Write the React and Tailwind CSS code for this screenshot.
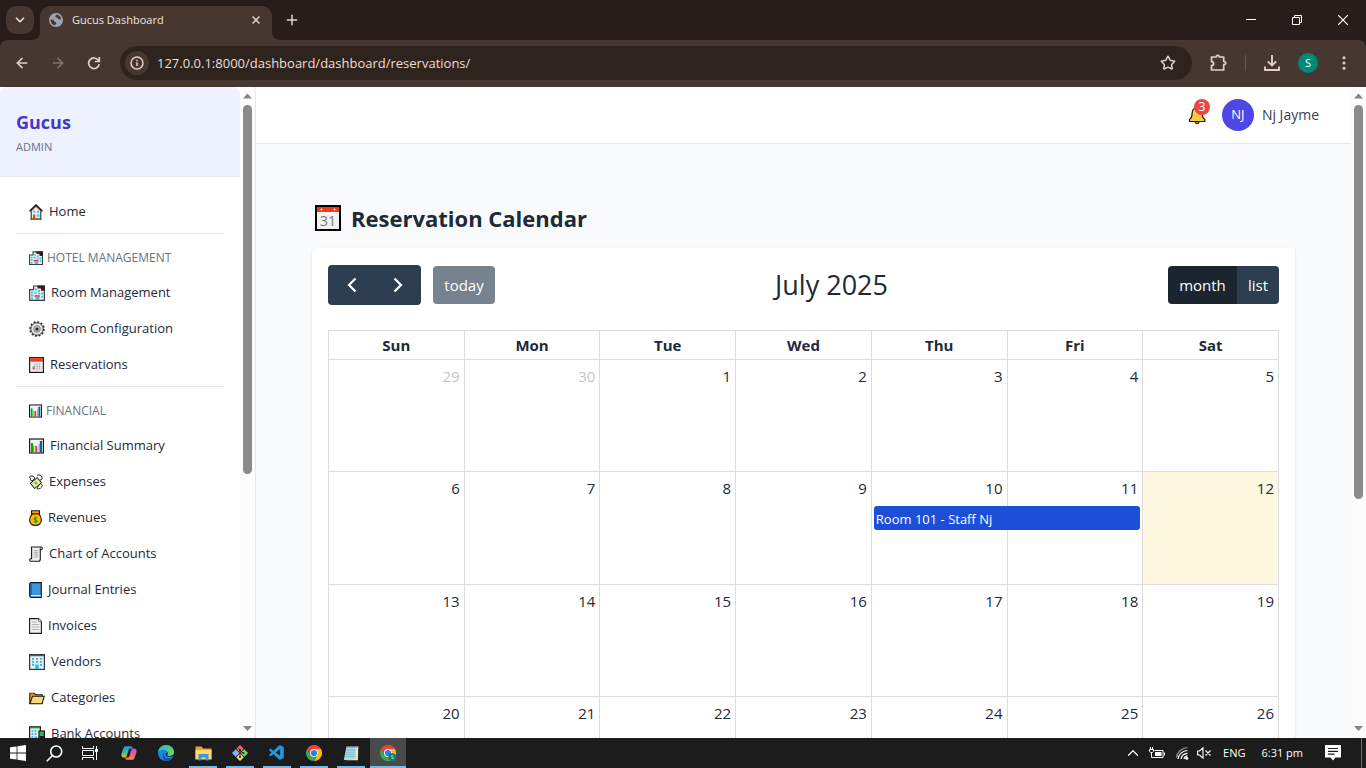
import React from "react";
import { ArrowLeft, ArrowRight, ChevronDown, ChevronUp, Plus, X, Star } from "lucide-react";
import { VscVscode } from "react-icons/vsc";

const K = "#1b1b1b";

/* ---------- small colour drawings used as menu icons ---------- */

function House({ className }) {
  return (
    <svg className={className} viewBox="0 0 14 16" aria-hidden="true">
      <path d="M2.2 6.5V15h9.6V6.5L7 1.8z" fill="#ededed" stroke={K} />
      <path d="M.5 7.3 7 1l6.5 6.3" fill="none" stroke={K} strokeWidth="1.5" />
      <path d="M2.5 6.8 7 2.5l4.5 4.3" fill="none" stroke="#d13438" strokeWidth=".8" />
      <rect x="4" y="10.500" width="2.200" height="4.500" fill="#f03a17" />
      <rect x="8" y="10.500" width="2.500" height="2.300" fill="#3bc9ee" />
      <rect x="4.300" y="6.700" width="2" height="2" fill="#3bc9ee" />
      <rect x="8" y="6.700" width="2" height="2" fill="#3bc9ee" />
      <path d="M1 15.300h12" stroke="#16a010" strokeWidth="1" />
    </svg>
  );
}

function Hotel({ className }) {
  return (
    <svg className={className} viewBox="0 0 16 16" aria-hidden="true">
      <path d="M.6 15.400V4.600h4V1h10.800v14.400z" fill="#e9eef0" stroke="#3a3f42" strokeWidth="1.200" />
      <path d="M8.500.800h7v5h-3.500V3.500H8.500z" fill="#7a0f1c" />
      <path d="M13 1v4.500M15 1v4.500M13 3.300h2M8.500 1.200h7" stroke={K} strokeWidth="1" />
      <g fill="#35c3ea">
        <path d="M2 6.500h2v2H2zM2 9.500h2v2H2zM2 12.500h2v2H2zM6 3.500h1.800v2H6zM5.500 6.700h2v2h-2zM9 5h2v1.800H9zM12 7.500h2v2h-2zM9 7.800h2v1.500H9zM12.300 10.700h1.700v2h-1.700z" />
        <rect x="6.500" y="12" width="4" height="3" />
      </g>
      <path d="M5.300 11h5.600" stroke="#e81224" strokeWidth="1.300" />
    </svg>
  );
}

function Gear({ className }) {
  return (
    <svg className={className} viewBox="0 0 16 16" aria-hidden="true">
      <circle cx="8" cy="8" r="6.900" fill="none" stroke="#2b2b2b" strokeWidth="1.800" strokeDasharray="2 1.610" />
      <circle cx="8" cy="8" r="6.200" fill="#e2e2e2" stroke="#3a3a3a" strokeWidth=".9" />
      <circle cx="8" cy="8" r="3.300" fill="#bdbdbd" stroke="#777" strokeWidth=".8" />
      <circle cx="8" cy="8" r="1.500" fill={K} />
    </svg>
  );
}

function CalendarGrid({ className }) {
  return (
    <svg className={className} viewBox="0 0 15 16" aria-hidden="true">
      <rect x=".6" y=".6" width="13.800" height="14.800" fill="#f0f0f0" stroke={K} strokeWidth="1.200" />
      <rect x="1.200" y="1.200" width="12.600" height="3.500" fill="#f03a17" />
      <path d="M5.500 7H12M3 9.500h9.500M3 12h9M5.500 6.500V13M8 6.500V13M10.500 6.500V12" stroke="#b0b0b0" strokeWidth=".7" />
      <rect x="3.600" y="10" width="2.200" height="2.200" fill="#e8634f" />
    </svg>
  );
}

function CalendarDate({ className }) {
  return (
    <svg className={className} viewBox="0 0 26 26" aria-hidden="true">
      <rect x="1" y="1" width="24" height="24" fill="#f2f2f2" stroke="#000" strokeWidth="2" />
      <rect x="2" y="2" width="22" height="5" fill="#f03a17" />
      <circle cx="6.500" cy="4.500" r=".9" fill="#fff" />
      <circle cx="19.500" cy="4.500" r=".9" fill="#fff" />
      <text x="13" y="21" textAnchor="middle" fontFamily="Open Sans, sans-serif" fontSize="14" fontWeight="400" fill="#767676">31</text>
    </svg>
  );
}

function Bars({ className }) {
  return (
    <svg className={className} viewBox="0 0 15 16" aria-hidden="true">
      <rect x=".6" y="1" width="13.800" height="14" fill="#f2f2f2" stroke={K} strokeWidth="1.200" />
      <rect x="2" y="5" width="2" height="9.400" fill="#16a010" />
      <rect x="4" y="7.500" width="1.300" height="6.900" fill="#35d52b" />
      <rect x="6.300" y="8" width="2" height="6.400" fill="#f03a17" />
      <rect x="10.800" y="3" width="2.200" height="11.400" fill="#0063b1" />
      <rect x="9.600" y="6" width="1.200" height="8.400" fill="#5aa9e6" />
    </svg>
  );
}

function WingedMoney({ className }) {
  return (
    <svg className={className} viewBox="0 0 14 16" aria-hidden="true">
      <path d="M1 2.200 4 2l2 2-3 3-2-1.500.8-.8L.7 4z" fill="#fff" stroke={K} strokeWidth=".9" />
      <path d="M8 1.200c2-.7 4.500-.2 5 1.800.5 1.800-.5 2.800-2 3.200" fill="#fff" stroke={K} strokeWidth="1" />
      <path d="M8 14.800c2.500.5 5-.8 5.300-3.300L11 9z" fill="#fff" stroke={K} strokeWidth=".9" />
      <path d="m1.300 9.300 7-5.800 4.300 5.300-7 5.800z" fill="#b5d56a" stroke={K} strokeWidth="1" />
      <path d="m3 9.500 5-4.300 3 3.700-5 4.200z" fill="#e8f2c4" />
      <circle cx="7" cy="9" r="1.600" fill="#8db33a" />
    </svg>
  );
}

function MoneyBag({ className }) {
  return (
    <svg className={className} viewBox="0 0 13 16" aria-hidden="true">
      <path d="M2.500.8h8v2.800h-8z" fill="#f5a300" stroke={K} strokeWidth="1.100" />
      <path d="M3.300 4h6.400c1.800 1.500 2.700 3.500 2.700 6 0 3.400-2.400 5.400-5.900 5.400S.6 13.400.6 10c0-2.500.9-4.500 2.700-6z" fill="#ffb900" stroke={K} strokeWidth="1.100" />
      <path d="M3.300 4.200h6.400" stroke="#b35a00" strokeWidth="1.300" />
      <path d="M8.300 8.200c-.6-.6-3.300-.9-3.300.7 0 1.500 3.300.7 3.300 2.300 0 1.500-2.800 1.300-3.600.5M6.600 6.800v6.200" fill="none" stroke="#16a010" strokeWidth="1.100" />
    </svg>
  );
}

function Scroll({ className }) {
  return (
    <svg className={className} viewBox="0 0 14 16" aria-hidden="true">
      <path d="M2.500 1h9.800c1.300 0 1.300 2.700 0 2.700h-1V13c0 1.500-.6 2.300-1.800 2.300H1.600c-1.300 0-1.300-2.500 0-2.500h1V3C2.500 2 2 1.500 2.500 1z" fill="#f0f0f0" stroke={K} strokeWidth="1.100" />
      <path d="M4.500 4.500h5M4.500 6.700h5M4.500 8.900h5M4.500 11.100h5M7 4.500v7" stroke="#a8a8a8" strokeWidth=".8" />
      <path d="M11.300 3.700V1.500" stroke={K} strokeWidth=".8" />
    </svg>
  );
}

function BlueBook({ className }) {
  return (
    <svg className={className} viewBox="0 0 13 16" aria-hidden="true">
      <path d="M.7 2.200C.7 1 1.300.7 2.200.7h10.100v14.600H2c-.8 0-1.300-.5-1.300-1.500z" fill="#3a96dd" stroke={K} strokeWidth="1.200" />
      <path d="M2 1.300v11.500" stroke="#0063b1" strokeWidth="1.400" />
      <path d="M2 13.700h9.800" stroke="#e6f1fa" strokeWidth="1.200" />
    </svg>
  );
}

function Page({ className }) {
  return (
    <svg className={className} viewBox="0 0 13 16" aria-hidden="true">
      <path d="M.6.600h9L12.400 3.500v11.900H.6z" fill="#f2f2f2" stroke={K} strokeWidth="1.100" />
      <path d="M9.500.600v3h3" fill="#cfcfcf" stroke="#666" strokeWidth=".7" />
      <path d="M2.700 4h5M2.700 6.500h7.600M2.700 9h7.600M2.700 11.500h7.600" stroke="#b3b3b3" strokeWidth="1" />
    </svg>
  );
}

function Office({ className }) {
  return (
    <svg className={className} viewBox="0 0 16 16" aria-hidden="true">
      <rect x=".6" y=".6" width="14.800" height="14.800" fill="#e9eef0" stroke="#2f3a40" strokeWidth="1.200" />
      <path d="M1 1.500h14" stroke="#4f5b61" strokeWidth="1.400" />
      <path d="M3 4h2v1.700H3zM7 4h2v1.700H7zM11 4h2v1.700h-2zM3 7h2v1.700H3zM7 7h2v1.700H7zM11 7h2v1.700h-2zM3 10h2v1.700H3zM11 10h2v1.700h-2zM6.300 10.500h3.400V15H6.300z" fill="#28b8ea" />
    </svg>
  );
}

function Folder({ className }) {
  return (
    <svg className={className} viewBox="0 0 16 16" aria-hidden="true">
      <path d="M.8 13.500V3.200h4.500l1.300 1.500h6.600v8.800z" fill="#f5a300" stroke={K} strokeWidth="1.100" />
      <path d="M1.300 3.800h3.500" stroke="#f03a17" strokeWidth="1.300" />
      <path d="m1 13.700 2.500-7.500h11.800l-2.200 7.500z" fill="#ffd679" stroke={K} strokeWidth="1.100" />
    </svg>
  );
}

function Bank({ className }) {
  return (
    <svg className={className} viewBox="0 0 16 16" aria-hidden="true">
      <rect x=".6" y=".8" width="10.800" height="14.600" fill="#e9eef0" stroke={K} strokeWidth="1.200" />
      <path d="M1 1.600h10" stroke="#16a010" strokeWidth="1.600" />
      <rect x="10" y="5" width="5.400" height="10.400" fill="#2fb457" stroke={K} strokeWidth="1.200" />
      <path d="M10.500 10h4.500v5h-4.500z" fill={K} />
      <path d="M2.500 4h1.800v1.700H2.500zM5.500 4h1.800v1.700H5.500zM2.500 7h1.800v1.700H2.500zM5.500 7h1.800v1.700H5.500zM2.500 10h1.800v1.700H2.500zM5.500 10.500h2.500V15H5.500z" fill="#28b8ea" />
    </svg>
  );
}

function Bell({ className }) {
  return (
    <svg className={className} viewBox="0 0 18 20" aria-hidden="true">
      <path d="M7.300 16.500c0 3 3.700 3 3.700 0z" fill="#e0a010" stroke={K} strokeWidth="1.100" />
      <path d="M7.500 3c0-2 3.300-2 3.300 0 2.500.8 3.400 2.800 3.400 5.500 0 3 .4 4.500 2.600 6v2H1.500v-2c2.200-1.500 2.600-3 2.600-6C4.100 5.800 5 3.800 7.500 3z" fill="#ffc83d" stroke={K} strokeWidth="1.200" />
    </svg>
  );
}

/* ---------- taskbar drawings ---------- */

function ChromeLogo({ className, badge }) {
  return (
    <svg className={className} viewBox="0 0 16 16" aria-hidden="true">
      <path d="M1.070 4A8 8 0 0 1 14.930 4H8a4 4 0 0 0-3.460 6z" fill="#ea4335" />
      <path d="M14.930 4A8 8 0 0 1 8 16l3.460-6A4 4 0 0 0 8 4z" fill="#fbbc05" />
      <path d="M8 16A8 8 0 0 1 1.070 4l3.470 6a4 4 0 0 0 6.920 0z" fill="#34a853" />
      <circle cx="8" cy="8" r="4" fill="#fff" />
      <circle cx="8" cy="8" r="3.100" fill="#2f7cf0" />
      {badge && <circle cx="12.300" cy="12.300" r="4" fill="#0f7d6c" />}
      {badge && <text x="12.300" y="14.300" textAnchor="middle" fontSize="5.500" fontFamily="Open Sans, sans-serif" fill="#d7efe9">S</text>}
    </svg>
  );
}

function WindowsLogo({ className }) {
  return (
    <svg className={className} viewBox="0 0 16 16" aria-hidden="true" fill="#fff">
      <path d="M0 2.300 6.600 1.400v6.200H0zM7.400 1.300 16 0v7.600H7.400zM0 8.400h6.600v6.200L0 13.700zM7.400 8.400H16V16l-8.600-1.300z" />
    </svg>
  );
}

function SearchGlyph({ className }) {
  return (
    <svg className={className} viewBox="0 0 17 17" aria-hidden="true" fill="none" stroke="#fff" strokeWidth="1.600">
      <circle cx="10.200" cy="6.500" r="5.500" />
      <path d="M6.200 10.700.8 16.200" />
    </svg>
  );
}

function TaskView({ className }) {
  return (
    <svg className={className} viewBox="0 0 17 16" aria-hidden="true" fill="none" stroke="#fff" strokeWidth="1">
      <path d="M.5 1v2.500h11V1M.5 15v-2.500h11V15M.5 5.500h11v5H.5zM14.500 1v14" />
      <path d="M13 4h3v3h-3z" fill="#fff" stroke="none" />
    </svg>
  );
}

function Copilot({ className }) {
  return (
    <svg className={className} viewBox="0 0 16 16" aria-hidden="true">
      <defs>
        <linearGradient id="cp1" x1="0" y1="0" x2="0" y2="1">
          <stop offset="0" stopColor="#1b8fe8" />
          <stop offset=".6" stopColor="#49c281" />
          <stop offset="1" stopColor="#f2c11c" />
        </linearGradient>
        <linearGradient id="cp2" x1="0" y1="0" x2="0" y2="1">
          <stop offset="0" stopColor="#a358ef" />
          <stop offset=".5" stopColor="#f0568f" />
          <stop offset="1" stopColor="#fb8a45" />
        </linearGradient>
      </defs>
      <path d="M5 1.200h5c1.200 0 1.500 1 1.900 2.300H9.500c-1.200 0-1.700.7-2 1.800l-1.600 5.500c-.4 1.200-1 1.700-2.200 1.700H2.600C.8 12.500 0 11 .6 8.500L2.300 3.500C2.800 2 3.600 1.200 5 1.200z" fill="url(#cp1)" />
      <path d="M11 14.800H6c-1.200 0-1.500-1-1.900-2.300h2.400c1.200 0 1.700-.7 2-1.800l1.600-5.500c.4-1.200 1-1.700 2.200-1.700h1.100c1.800 0 2.600 1.500 2 4l-1.700 5c-.5 1.500-1.300 2.300-2.700 2.300z" fill="url(#cp2)" />
    </svg>
  );
}

function EdgeLogo({ className }) {
  return (
    <svg className={className} viewBox="0 0 16 16" aria-hidden="true">
      <defs>
        <linearGradient id="ed1" x1="0" y1="0" x2="1" y2=".5">
          <stop offset="0" stopColor="#2aa8e8" />
          <stop offset="1" stopColor="#5fdc5c" />
        </linearGradient>
      </defs>
      <circle cx="8" cy="8" r="8" fill="#1b87dc" />
      <path d="M.1 7.300C.6 3 4 0 8 0c4.600 0 8 3.300 8 7 0 2.500-2 4-4.400 4-1.900 0-2.800-.6-2.500-1.200.8-.8.9-1.600.7-2.300C9.300 5.700 7.600 4.700 5.400 4.700 3 4.700 1 5.800.1 7.300z" fill="url(#ed1)" />
      <path d="M6.300 7.200C5 9 6 12.800 10 13.200c2 .1 3.500-.1 4.700-.8C13.300 14.700 10.800 16 8 16c-3.600-1.200-4.600-6.500-1.700-8.800z" fill="#0f57ab" />
      <path d="M9.800 7.500c.2.700 0 1.500-.7 2.300-.3.600.6 1.200 2.500 1.200 1.900 0 3.500-.9 4.100-2.500l-.2 2.200c-2.500 1.800-7.500 1.300-8-1.200.1-1.200.9-2 2.300-2z" fill="#1c1c1c" />
    </svg>
  );
}

function Explorer({ className }) {
  return (
    <svg className={className} viewBox="0 0 17 15" aria-hidden="true">
      <path d="M.5.500h6L8 2.500h8.500V13H.5z" fill="#e8a33d" />
      <path d="M.5 4h16v9.500H.5z" fill="#ffd766" />
      <path d="M3.500 8h10v6.500h-2.800v-3H6.300v3H3.500z" fill="#3f95dd" />
    </svg>
  );
}

function GitLogo({ className }) {
  return (
    <svg className={className} viewBox="0 0 16 16" aria-hidden="true">
      <path d="m8 0 3.700 3.700L8 7.500 4.300 3.700z" fill="#f4655c" />
      <path d="m3.700 4.200 3.800 3.800-3.800 3.800L0 8z" fill="#80b3ff" />
      <path d="m12.300 4.200L16 8l-3.700 3.800L8.500 8z" fill="#7fd36a" />
      <path d="m8 8.500 3.700 3.800L8 16l-3.700-3.700z" fill="#ffe27a" />
      <path d="M6.500 3.200 8 5v7.500M8 5.500l3.200 2.700" fill="none" stroke="#222" strokeWidth=".9" />
      <circle cx="8" cy="5" r="1" fill="#222" />
      <circle cx="11.500" cy="8" r="1" fill="#222" />
      <circle cx="8" cy="12" r="1.100" fill="#222" />
    </svg>
  );
}

function Notepad({ className }) {
  return (
    <svg className={className} viewBox="0 0 16 16" aria-hidden="true">
      <path d="M3.500 1.500h11.800L13 15H.8z" fill="#a9dbe6" />
      <path d="M12.500 3 15.300 1.500 15 15.300H2L13 14z" fill="#e9e1cf" />
      <path d="M3.600 5h8.700M3.200 7.200H12M2.800 9.400h8.800M2.500 11.600h8.800" stroke="#6fb0c0" strokeWidth=".7" />
      <path d="M4 2h10" stroke="#6b7d82" strokeWidth="1.700" strokeDasharray="1 .8" />
    </svg>
  );
}

function Globe({ className }) {
  return (
    <svg className={className} viewBox="0 0 14 14" aria-hidden="true">
      <circle cx="7" cy="7" r="7" fill="#9aa5b1" />
      <path d="M1.600 6.500c1.700-.2 3.400.3 3.600 1.700.2 1 1.700.5 2 1.700.2 1-.7 1.500-1.500 2.300C3 11.700 1.300 9.500 1.600 6.500zM6.700 1.700c.6.900-.6 1.500-.3 2.400.4.900 2.200.3 2.500 1.400.3 1.200 1.800.9 3.300.6-.2-2.800-2.600-4.700-5.500-4.400z" fill="#463831" />
    </svg>
  );
}

/* ---------- browser frame ---------- */

function TabStrip() {
  return (
    <header className="flex h-10 shrink-0 items-start bg-[#281d18] pl-1.5 text-[#e6d7cf]">
      <button aria-label="Search tabs" className="mt-1.5 flex size-7 items-center justify-center rounded-[10px] bg-[#463831]">
        <ChevronDown className="size-3.5" strokeWidth={3} />
      </button>
      <div className="relative mt-1.5 ml-1.5 flex h-[34px] w-[232px] items-center rounded-t-[10px] bg-[#463831] pr-[9px] pb-1.5 pl-[9px] before:absolute before:bottom-0 before:-left-2 before:size-2 before:bg-[radial-gradient(circle_at_0_0,transparent_8px,#463831_8px)] after:absolute after:-right-2 after:bottom-0 after:size-2 after:bg-[radial-gradient(circle_at_100%_0,transparent_8px,#463831_8px)]">
        <Globe className="size-3.5" />
        <span className="ml-[9px] flex-1 text-[11px] text-[#f0e4de]">Gucus Dashboard</span>
        <button aria-label="Close tab" className="flex size-3.5 items-center justify-center">
          <X className="size-3" strokeWidth={3} />
        </button>
      </div>
      <button aria-label="New tab" className="mt-3 ml-3 flex size-4 items-center justify-center">
        <Plus className="size-4" strokeWidth={2.2} />
      </button>
      <div className="ml-auto flex h-10 items-center text-white">
        <button aria-label="Minimize" className="flex h-10 w-[46px] items-center justify-center">
          <svg className="size-2.5" viewBox="0 0 10 10"><path d="M0 4.500h10" stroke="currentColor" /></svg>
        </button>
        <button aria-label="Restore" className="flex h-10 w-[46px] items-center justify-center">
          <svg className="size-2.5" viewBox="0 0 10 10" fill="none" stroke="currentColor">
            <path d="M.5 2.500h7v7h-7zM2.500 2.500v-2h7v7h-2" />
          </svg>
        </button>
        <button aria-label="Close" className="flex h-10 w-[46px] items-center justify-center">
          <svg className="size-2.5" viewBox="0 0 10 10" stroke="currentColor" strokeWidth="1.200"><path d="m0 0 10 10M10 0 0 10" /></svg>
        </button>
      </div>
    </header>
  );
}

function AddressBar() {
  return (
    <div className="shrink-0 bg-[#281d18]">
      <div className="flex h-[47px] items-center rounded-t-lg bg-[#463831] px-3.5 pb-0.5 text-[#e2d0c7]">
        <button aria-label="Back" className="flex size-4 items-center justify-center"><ArrowLeft className="size-4" strokeWidth={2.4} /></button>
        <button aria-label="Forward" className="ml-5 flex size-4 items-center justify-center text-[#84746c]"><ArrowRight className="size-4" strokeWidth={2.4} /></button>
        <button aria-label="Reload" className="ml-5 flex size-4 items-center justify-center">
          <svg className="size-3.5" viewBox="0 0 14 14" fill="none" stroke="currentColor" strokeWidth="1.700">
            <path d="M12.200 8.200A5.300 5.300 0 1 1 11.300 4.200M12.300 1v4.500H7.800" />
          </svg>
        </button>
        <div className="ml-[18px] flex h-[34px] flex-1 items-center rounded-full bg-[#2f241d] pr-4 pl-[5px]">
          <button aria-label="Site information" className="flex size-6 items-center justify-center rounded-full bg-[#463831]">
            <svg className="size-3.5" viewBox="0 0 14 14" fill="none" stroke="currentColor" strokeWidth="1.500">
              <circle cx="7" cy="7" r="6" /><path d="M7 6.300V10M7 3.700v1.500" />
            </svg>
          </button>
          <input aria-label="Address" readOnly value="127.0.0.1:8000/dashboard/dashboard/reservations/" className="ml-2 h-6 min-w-0 flex-1 bg-transparent text-[13px] text-[#ecdfd8] outline-none" />
          <button aria-label="Bookmark"><Star className="size-4" strokeWidth={2.2} /></button>
        </div>
        <button aria-label="Extensions" className="ml-[18px]">
          <svg className="size-[18px]" viewBox="0 0 18 18" fill="none" stroke="currentColor" strokeWidth="1.700">
            <path d="M1.500 3h4.700c0-2.300 3.200-2.300 3.200 0h4.300v4.500c2.700 0 2.700 3.200 0 3.200V16H1.500v-4.300c2.800-.3 2.800-3.700 0-4z" strokeLinejoin="round" />
          </svg>
        </button>
        <span className="ml-[17px] h-4 w-px bg-[#6a5850]" />
        <button aria-label="Downloads" className="ml-[18px]">
          <svg className="size-4" viewBox="0 0 16 16" fill="none" stroke="currentColor" strokeWidth="1.900">
            <path d="M8 0v10M3.800 6.300 8 10.500l4.200-4.200M1 11.500V15h14v-3.500" />
          </svg>
        </button>
        <button aria-label="Profile" className="ml-[18px] flex size-5 items-center justify-center rounded-full bg-[#00897b] text-[11px] leading-none text-white">S</button>
        <button aria-label="Menu" className="ml-[18px] flex w-4 justify-center">
          <svg className="h-4 w-1" viewBox="0 0 4 16" fill="currentColor">
            <circle cx="2" cy="2.800" r="1.500" /><circle cx="2" cy="8" r="1.500" /><circle cx="2" cy="13.200" r="1.500" />
          </svg>
        </button>
      </div>
    </div>
  );
}

function Scrollbar({ thumb }) {
  return (
    <div aria-hidden="true" className="flex w-[15px] shrink-0 flex-col items-center bg-[#fcfcfc]">
      <svg className="h-[18px] w-[9px] shrink-0" viewBox="0 0 9 18" fill="#858585"><path d="M0 11.500h9L4.500 6.500z" /></svg>
      <div className="min-h-0 w-full flex-1">
        <div className={`mx-auto w-[9px] rounded-full bg-[#8b8b8b] ${thumb}`} />
      </div>
      <svg className="h-[18px] w-[9px] shrink-0" viewBox="0 0 9 18" fill="#858585"><path d="M0 6h9l-4.500 5z" /></svg>
    </div>
  );
}

/* ---------- application ---------- */

const menu = [
  { items: [{ label: "Home", Icon: House, size: "h-4 w-3.5" }] },
  {
    title: "HOTEL MANAGEMENT", Icon: Hotel, size: "h-3.5 w-3.5",
    items: [
      { label: "Room Management", Icon: Hotel, size: "h-4 w-4" },
      { label: "Room Configuration", Icon: Gear, size: "h-4 w-4" },
      { label: "Reservations", Icon: CalendarGrid, size: "h-4 w-[15px]" },
    ],
  },
  {
    title: "FINANCIAL", Icon: Bars, size: "h-3.5 w-[13px]",
    items: [
      { label: "Financial Summary", Icon: Bars, size: "h-4 w-[15px]" },
      { label: "Expenses", Icon: WingedMoney, size: "h-4 w-3.5" },
      { label: "Revenues", Icon: MoneyBag, size: "h-4 w-[13px]" },
      { label: "Chart of Accounts", Icon: Scroll, size: "h-4 w-3.5" },
      { label: "Journal Entries", Icon: BlueBook, size: "h-4 w-[13px]" },
      { label: "Invoices", Icon: Page, size: "h-4 w-[13px]" },
      { label: "Vendors", Icon: Office, size: "h-4 w-4" },
      { label: "Categories", Icon: Folder, size: "h-4 w-4" },
      { label: "Bank Accounts", Icon: Bank, size: "h-4 w-4" },
    ],
  },
];

function Sidebar() {
  return (
    <aside className="flex w-64 shrink-0 border-r border-gray-200 bg-white">
      <div className="min-w-0 flex-1 overflow-hidden">
        <div className="h-[90px] rounded-t-lg border-b border-gray-200 bg-[#eef2ff] px-4 pt-5">
          <div className="text-lg leading-[30px] font-bold text-[#4338ca]">Gucus</div>
          <div className="text-[11px] leading-5 text-gray-500">ADMIN</div>
        </div>
        <nav className="p-4">
          {menu.map((group, i) => (
            <section key={i} className={i ? "mt-1 border-t border-gray-200 pt-4" : ""}>
              {group.title && (
                <h2 className="mb-2 flex h-4 items-center gap-1 px-[13px] text-xs font-medium text-gray-500">
                  <group.Icon className={group.size} />
                  {group.title}
                </h2>
              )}
              {group.items.map(({ label, Icon, size }) => (
                <a key={label} href="#" className="flex h-9 items-center gap-1.5 px-[13px] pt-0.5 text-[13px] text-gray-800">
                  <Icon className={size} />
                  {label}
                </a>
              ))}
            </section>
          ))}
        </nav>
      </div>
      <Scrollbar thumb="h-[60%]" />
    </aside>
  );
}

const weekdays = ["Sun", "Mon", "Tue", "Wed", "Thu", "Fri", "Sat"];
const weeks = Array.from({ length: 5 }, (_, w) =>
  Array.from({ length: 7 }, (_, d) => {
    const n = w * 7 + d - 1;
    if (n < 1) return { day: 30 + n, other: true };
    if (n > 31) return { day: n - 31, other: true };
    return { day: n };
  })
);
const today = 12;
const reservation = { start: 10, title: "Room 101 - Staff Nj" };

function Calendar() {
  return (
    <div className="rounded bg-white p-4 shadow-sm">
      <div className="mb-6 flex h-[42px] items-center justify-between text-[15px] text-white">
        <div className="flex items-center gap-3">
          <div className="flex h-10 overflow-hidden rounded bg-[#2c3e50]">
            <button aria-label="Previous month" className="flex w-[47px] items-center justify-center">
              <svg className="h-4 w-2.5" viewBox="0 0 10 16" fill="none" stroke="currentColor" strokeWidth="2.200"><path d="M8.500 1.500 2 8l6.500 6.500" /></svg>
            </button>
            <button aria-label="Next month" className="flex w-[46px] items-center justify-center">
              <svg className="h-4 w-2.5" viewBox="0 0 10 16" fill="none" stroke="currentColor" strokeWidth="2.200"><path d="M1.500 1.500 8 8l-6.500 6.500" /></svg>
            </button>
          </div>
          <button className="h-[38px] w-[62px] rounded bg-[#76828e]">today</button>
        </div>
        <h2 className="text-[27px] leading-[42px] text-gray-800">July 2025</h2>
        <div className="flex h-[38px] overflow-hidden rounded">
          <button className="w-[69px] bg-[#1a252f]">month</button>
          <button className="w-[42px] bg-[#2c3e50]">list</button>
        </div>
      </div>
      <table className="w-full table-fixed border-collapse text-[15px] leading-6 text-gray-800">
        <thead>
          <tr className="h-[29px]">
            {weekdays.map((d) => (
              <th key={d} scope="col" className="border border-[#ddd] p-0 font-bold">{d}</th>
            ))}
          </tr>
        </thead>
        <tbody>
          {weeks.map((week, i) => (
            <tr key={i} className="odd:h-28 even:h-[113px]">
              {week.map(({ day, other }) => (
                <td key={day} className={`border border-[#ddd] p-0 align-top ${!other && day === today ? "bg-[#fff8e0]" : ""}`}>
                  <div className={`p-1 text-right ${other ? "text-gray-800/30" : ""}`}>{day}</div>
                  {!other && day === reservation.start && (
                    <a href="#" className="relative z-10 mt-0.5 ml-0.5 block h-6 w-[calc(200%-3px)] rounded-[3px] bg-[#1d4ed8] px-0.5 text-[13px] leading-[26px] whitespace-nowrap text-white">
                      {reservation.title}
                    </a>
                  )}
                </td>
              ))}
            </tr>
          ))}
        </tbody>
      </table>
    </div>
  );
}

function Main() {
  return (
    <div className="flex min-w-0 flex-1">
      <div className="min-w-0 flex-1 overflow-hidden bg-[#f9fafb]">
        <div className="flex items-center justify-end border-b border-gray-200 bg-white py-3 pr-8">
          <button aria-label="Notifications" className="relative mr-4">
            <Bell className="h-5 w-[18px]" />
            <span className="absolute -top-1.5 -right-1 flex size-4 items-center justify-center rounded-full bg-[#ef4444] text-xs leading-none text-white">3</span>
          </button>
          <span className="flex size-8 items-center justify-center rounded-full bg-[#4f46e5] text-[13px] text-white">NJ</span>
          <span className="ml-2 text-sm font-medium text-gray-700">Nj Jayme</span>
        </div>
        <main className="p-14">
          <h1 className="mb-4 flex h-8 items-center gap-2.5 pt-1 pl-[3px] text-[22px] font-bold text-gray-800">
            <CalendarDate className="size-[26px]" />
            Reservation Calendar
          </h1>
          <Calendar />
        </main>
      </div>
      <Scrollbar thumb="h-[64%]" />
    </div>
  );
}

/* ---------- taskbar ---------- */

const apps = [
  { name: "Copilot", icon: <Copilot className="size-4" /> },
  { name: "Edge", icon: <EdgeLogo className="size-4" /> },
  { name: "File Explorer", icon: <Explorer className="h-[15px] w-[17px]" />, open: true },
  { name: "Git", icon: <GitLogo className="size-4" />, open: true },
  { name: "Visual Studio Code", icon: <VscVscode className="size-[18px] text-[#2196e3]" />, open: true },
  { name: "Chrome", icon: <ChromeLogo className="size-4" />, open: true },
  { name: "Notepad", icon: <Notepad className="size-4" />, open: true },
  { name: "Chrome, Gucus Dashboard", icon: <ChromeLogo className="size-4" badge />, active: true },
];

function Taskbar() {
  return (
    <footer className="flex h-[30px] shrink-0 items-center bg-[#1c1c1c] text-white">
      <button aria-label="Start" className="flex h-full w-9 items-center justify-center"><WindowsLogo className="size-4" /></button>
      <button aria-label="Search" className="flex h-full w-9 items-center justify-center"><SearchGlyph className="size-[17px]" /></button>
      <button aria-label="Task view" className="mr-[3px] flex h-full w-9 items-center justify-center"><TaskView className="h-4 w-[17px]" /></button>
      <div className="flex h-full gap-px">
        {apps.map((app) => (
          <button key={app.name} aria-label={app.name} className={`flex h-full w-9 flex-col items-center ${app.active ? "bg-[#4a4a4a]" : ""}`}>
            <span className="flex h-7 items-center pt-0.5">{app.icon}</span>
            <span className={app.active ? "h-0.5 w-full bg-[#76b9ed]" : app.open ? "h-0.5 w-7 bg-[#76b9ed]" : "h-0.5"} />
          </button>
        ))}
      </div>
      <div className="ml-auto flex h-full items-center">
        <button aria-label="Show hidden icons" className="flex w-5 justify-center"><ChevronUp className="size-[18px]" strokeWidth={1.6} /></button>
        <svg className="ml-1.5 h-3 w-4" viewBox="0 0 16 12" fill="none" stroke="#fff">
          <path d="M5.500 3.500h8.500v7H4M15.500 5.500v3M1.500 0v2.500M3.500 0v2.500M.5 2.500h4v2l-1 1h-2l-1-1zM2.500 5.500v5H4" />
          <path d="M6 5h6.500v4H6z" fill="#fff" stroke="none" />
        </svg>
        <svg className="ml-2.5 size-3.5" viewBox="0 0 14 14" fill="none" stroke="#fff" strokeWidth="1.200">
          <path d="M1.500 11.500C2 6.500 6.500 2 12.500 1.500" stroke="#999" />
          <path d="M3 13C3.500 8.500 7.500 4.700 12.500 4.500M6 13c.3-3 3-5.600 6.500-5.700M9 13c.2-1.500 1.700-3 3.500-3.200" />
          <circle cx="11.700" cy="12.300" r="1.500" fill="#fff" stroke="none" />
        </svg>
        <svg className="ml-2 h-3 w-3.5" viewBox="0 0 14 12" fill="none" stroke="#fff" strokeWidth="1.100">
          <path d="M.6 4h2L6 .8v10.400L2.600 8h-2zM8.500 3.500l5 5M13.500 3.500l-5 5" />
        </svg>
        <span className="ml-3 text-[11px]">ENG</span>
        <time className="ml-4 text-[11px]">6:31 pm</time>
        <button aria-label="Notifications" className="ml-[22px]">
          <svg className="size-4" viewBox="0 0 16 16">
            <path d="M0 0h16v12.500h-5.500L8 15.500l-2.500-3H0z" fill="#fff" />
            <path d="M3 3.500h10M3 6.300h10M3 9.100h6.500" stroke="#1c1c1c" strokeWidth="1.200" />
          </svg>
        </button>
        <span className="ml-5 h-full w-px bg-[#6b6b6b]" />
        <span className="w-1" />
      </div>
    </footer>
  );
}

export default function App() {
  return (
    <div className="flex h-screen flex-col overflow-hidden font-['Open_Sans','Noto_Sans',sans-serif]">
      <TabStrip />
      <AddressBar />
      <div className="flex min-h-0 flex-1 bg-white">
        <Sidebar />
        <Main />
      </div>
      <Taskbar />
    </div>
  );
}
